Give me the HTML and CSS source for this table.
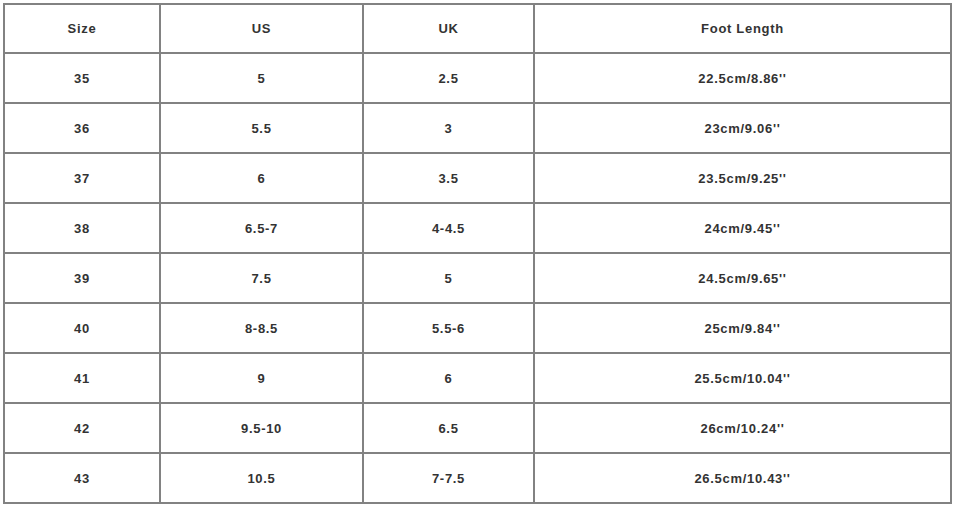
FILE: index.html
```html
<!DOCTYPE html>
<html>
<head>
<meta charset="utf-8">
<link rel="stylesheet" href="styles.css">
</head>
<body>
<div class="chart">
  <div class="cell">Size</div><div class="cell">US</div><div class="cell">UK</div><div class="cell">Foot Length</div>
  <div class="cell">35</div><div class="cell">5</div><div class="cell">2.5</div><div class="cell">22.5cm/8.86''</div>
  <div class="cell">36</div><div class="cell">5.5</div><div class="cell">3</div><div class="cell">23cm/9.06''</div>
  <div class="cell">37</div><div class="cell">6</div><div class="cell">3.5</div><div class="cell">23.5cm/9.25''</div>
  <div class="cell">38</div><div class="cell">6.5-7</div><div class="cell">4-4.5</div><div class="cell">24cm/9.45''</div>
  <div class="cell">39</div><div class="cell">7.5</div><div class="cell">5</div><div class="cell">24.5cm/9.65''</div>
  <div class="cell">40</div><div class="cell">8-8.5</div><div class="cell">5.5-6</div><div class="cell">25cm/9.84''</div>
  <div class="cell">41</div><div class="cell">9</div><div class="cell">6</div><div class="cell">25.5cm/10.04''</div>
  <div class="cell">42</div><div class="cell">9.5-10</div><div class="cell">6.5</div><div class="cell">26cm/10.24''</div>
  <div class="cell">43</div><div class="cell">10.5</div><div class="cell">7-7.5</div><div class="cell">26.5cm/10.43''</div>
</div>
</body>
</html>
```
FILE: styles.css
```css
html, body {
  margin: 0;
  background: #ffffff;
}
body {
  padding: 3px 0 0 3px;
  font-family: "Liberation Sans", Arial, sans-serif;
}
.chart {
  display: inline-grid;
  grid-template-columns: 154px 201px 169px 415px;
  grid-template-rows: 47px repeat(9, 48px);
  gap: 2px;
  padding: 2px;
  background: #828282;
}
.cell {
  background: #ffffff;
  display: flex;
  align-items: center;
  justify-content: center;
  font-size: 13px;
  font-weight: bold;
  letter-spacing: 0.7px;
  color: #333333;
}
```
